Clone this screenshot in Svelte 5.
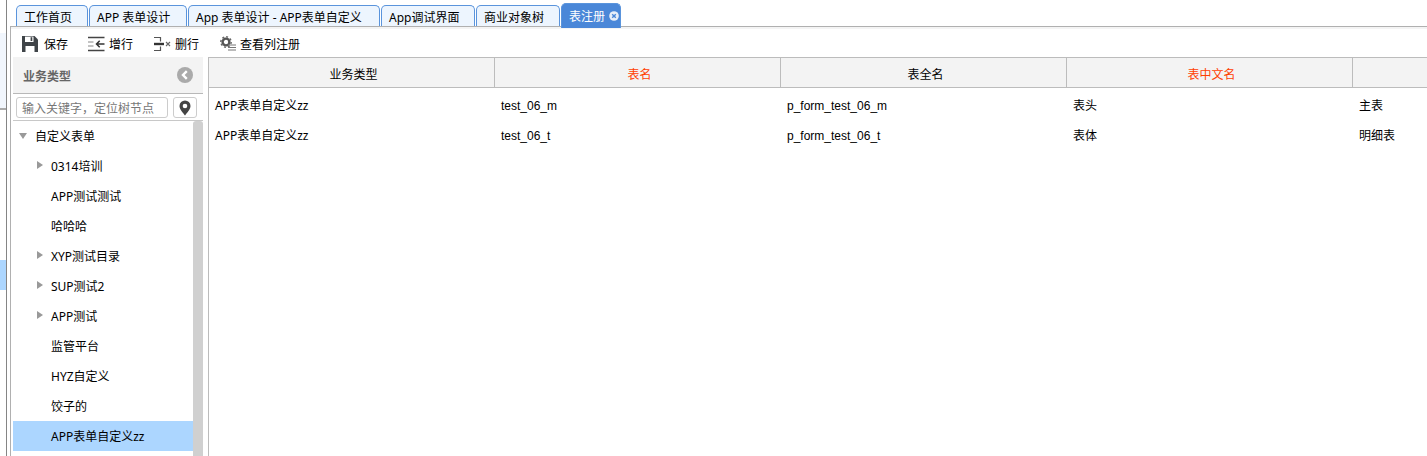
<script>
  const tabs = [
    { name: '工作首页', w: 72 },
    { name: 'APP 表单设计', w: 98 },
    { name: 'App 表单设计 - APP表单自定义', w: 192 },
    { name: 'App调试界面', w: 94 },
    { name: '商业对象树', w: 84 },
  ];

  const nodes = [
    { name: '0314培训', arrow: true },
    { name: 'APP测试测试' },
    { name: '哈哈哈' },
    { name: 'XYP测试目录', arrow: true },
    { name: 'SUP测试2', arrow: true },
    { name: 'APP测试', arrow: true },
    { name: '监管平台' },
    { name: 'HYZ自定义' },
    { name: '饺子的' },
    { name: 'APP表单自定义zz', selected: true },
  ];

  const columns = [
    { name: '业务类型' },
    { name: '表名', required: true },
    { name: '表全名' },
    { name: '表中文名', required: true },
    { name: '' },
  ];

  const rows = [
    ['APP表单自定义zz', 'test_06_m', 'p_form_test_06_m', '表头', '主表'],
    ['APP表单自定义zz', 'test_06_t', 'p_form_test_06_t', '表体', '明细表'],
  ];
</script>

<div class="page">
  <div class="outer">
    <div class="outer-pale"></div>
    <div class="outer-mark"></div>
  </div>
  <div class="main">
    <div class="tabs">
      {#each tabs as tab}
        <div class="tab" style="width: {tab.w}px">{tab.name}</div>
      {/each}
      <div class="tab active">
        表注册
        <svg class="close" width="10" height="10" viewBox="0 0 10 10">
          <circle cx="5" cy="5" r="4.800" fill="#e8eef8" />
          <path d="M3.200 3.200l3.600 3.600M6.800 3.200l-3.600 3.600" stroke="#4a87d8" stroke-width="1.400" />
        </svg>
      </div>
    </div>
    <div class="panel">
      <div class="toolbar">
        <div class="tool save">
          <svg width="16" height="16" viewBox="0 0 16 16">
            <path d="M0 0h12.500L16 3.500V16H0z" fill="#3f4448" />
            <rect x="3" y=".6" width="8.500" height="5.400" fill="#fff" />
            <rect x="8.600" y="1.200" width="1.700" height="3.800" fill="#3f4448" />
            <rect x="3.500" y="10" width="9" height="6" fill="#fff" />
          </svg>
          保存
        </div>
        <div class="tool add">
          <svg width="17" height="16" viewBox="0 0 17 16">
            <path d="M0 1.500h16.500M0 14.500h16.500" stroke="#444" stroke-width="1.400" />
            <path d="M0 6h5.500M0 10h5.500" stroke="#888" stroke-width="1" />
            <path d="M16.500 8H8.500M11.700 4.800L8.500 8l3.200 3.200" stroke="#333" stroke-width="1.500" fill="none" />
          </svg>
          增行
        </div>
        <div class="tool del">
          <svg width="17" height="16" viewBox="0 0 17 16">
            <path d="M0 1.500h6.500v4M0 14.500h6.500v-4" stroke="#555" stroke-width="1.200" fill="none" />
            <path d="M0 8h10" stroke="#333" stroke-width="2.400" />
            <path d="M12 6l4 4M16 6l-4 4" stroke="#666" stroke-width="1.100" />
          </svg>
          删行
        </div>
        <div class="tool cols">
          <svg width="16" height="15" viewBox="0 0 16 15">
            <circle cx="6" cy="6" r="3.400" fill="none" stroke="#555" stroke-width="2.400" />
            <circle cx="6" cy="6" r="5.200" fill="none" stroke="#666" stroke-width="1.400" stroke-dasharray="2 2" />
            <path d="M8 9h8M8 11.500h8M8 14h8" stroke="#777" stroke-width="1" />
          </svg>
          查看列注册
        </div>
      </div>
      <div class="body">
        <aside class="side">
          <div class="side-head">
            <span>业务类型</span>
            <svg width="16" height="16" viewBox="0 0 16 16">
              <circle cx="8" cy="8" r="8" fill="#aaa" />
              <path d="M9.800 4.200L6 8l3.800 3.800" stroke="#fff" stroke-width="2.400" fill="none" />
            </svg>
          </div>
          <div class="search">
            <div class="search-input">输入关键字，定位树节点</div>
            <div class="search-btn">
              <svg width="12" height="16" viewBox="0 0 12 16">
                <path d="M6 .5a5.500 5.500 0 0 1 5.500 5.500c0 3.500-3.500 6.800-5.500 9.500C4 12.800.5 9.500.5 6A5.500 5.500 0 0 1 6 .5z" fill="#444" />
                <circle cx="6" cy="6" r="2.300" fill="#fff" />
              </svg>
            </div>
          </div>
          <div class="tree">
            <div class="tree-list">
              <div class="node root">
                <i class="arrow down"></i>
                自定义表单
              </div>
              {#each nodes as node}
                <div class="node child" class:selected={node.selected}>
                  {#if node.arrow}<i class="arrow"></i>{/if}
                  {node.name}
                </div>
              {/each}
            </div>
            <div class="scrollbar"></div>
          </div>
        </aside>
        <section class="grid">
          <div class="grid-head">
            {#each columns as col}
              <div class="th" class:required={col.required}>{col.name}</div>
            {/each}
          </div>
          {#each rows as row}
            <div class="tr">
              {#each row as cell}
                <div class="td">{cell}</div>
              {/each}
            </div>
          {/each}
        </section>
      </div>
    </div>
  </div>
</div>

<style>
  :global(body) {
    margin: 0;
    background: #fff;
    overflow: hidden;
  }

  .page {
    display: flex;
    height: 456px;
    overflow: hidden;
    font-family: "Noto Sans", "Noto Sans CJK SC", sans-serif;
    font-size: 12px;
    color: #000;
  }

  .outer {
    width: 6px;
    flex: none;
    border-right: 1px solid #858585;
  }

  .outer-pale {
    margin-top: 33px;
    height: 75px;
    background: #f1f6fd;
    border-bottom: 2px solid #aaa;
  }

  .outer-mark {
    margin-top: 150px;
    height: 30px;
    background: #acd6ff;
  }

  .main {
    flex: 1;
    min-width: 0;
  }

  .tabs {
    display: flex;
    align-items: flex-end;
    gap: 1px;
    height: 27px;
    margin-left: 3px;
    padding-left: 6px;
    box-sizing: border-box;
    border-bottom: 1px solid #b0b0b0;
  }

  .tab {
    height: 21px;
    flex: none;
    box-sizing: border-box;
    border: 1px solid #5a94dc;
    border-bottom: none;
    border-radius: 5px 5px 0 0;
    background: #edf5fe;
    padding: 3px 0 0 7px;
    line-height: 18px;
    white-space: nowrap;
    overflow: hidden;
  }

  .tab.active {
    width: 60px;
    height: 25px;
    margin-bottom: -2px;
    padding-top: 4px;
    background: #4a87d8;
    color: #fff;
    position: relative;
  }

  .close {
    position: absolute;
    left: 47px;
    top: 7px;
  }

  .panel {
    border-left: 1px solid #b0b0b0;
    margin-left: 3px;
  }

  .toolbar {
    display: flex;
    align-items: center;
    height: 30px;
    padding-top: 1px;
    border-top: 2px solid #f4f4f4;
    box-sizing: border-box;
  }

  .tool {
    display: flex;
    align-items: center;
    gap: 4px;
    white-space: nowrap;
  }

  .save {
    margin-left: 11px;
    gap: 6px;
  }

  .add {
    margin-left: 20px;
  }

  .del,
  .cols {
    margin-left: 21px;
  }

  .body {
    display: flex;
    height: 399px;
  }

  .side {
    width: 197px;
    flex: none;
    box-sizing: border-box;
    padding: 0 5px 0 2px;
  }

  .side-head {
    display: flex;
    align-items: center;
    justify-content: space-between;
    height: 37px;
    padding: 0 10px;
    background: #f3f3f3;
    border-bottom: 1px solid #b8b8b8;
    box-sizing: border-box;
    color: #666;
    font-weight: bold;
  }

  .side-head span {
    padding-top: 2px;
  }

  .search {
    display: flex;
    gap: 5px;
    height: 27px;
    padding: 3px 0 0 3px;
    box-sizing: border-box;
    border-bottom: 1px solid #c8c8c8;
  }

  .search-input {
    width: 152px;
    height: 21px;
    box-sizing: border-box;
    border: 1px solid #ccc;
    border-radius: 3px;
    padding-left: 5px;
    line-height: 22px;
    color: #777;
    white-space: nowrap;
  }

  .search-btn {
    width: 24px;
    height: 21px;
    box-sizing: border-box;
    border: 1px solid #ccc;
    border-radius: 3px;
    display: flex;
    align-items: center;
    justify-content: center;
  }

  .tree {
    display: flex;
    height: 335px;
    overflow: hidden;
  }

  .tree-list {
    width: 180px;
    flex: none;
  }

  .scrollbar {
    width: 10px;
    background: #d0d0d0;
    border-radius: 3px 3px 0 0;
  }

  .node {
    position: relative;
    height: 30px;
    line-height: 32px;
    white-space: nowrap;
  }

  .root {
    padding-left: 22px;
  }

  .child {
    padding-left: 38px;
  }

  .selected {
    background: #acd6ff;
  }

  .arrow {
    position: absolute;
    left: 24px;
    top: 10px;
    width: 0;
    height: 0;
    border-style: solid;
    border-width: 4.500px 0 4.500px 6px;
    border-color: transparent transparent transparent #999;
  }

  .arrow.down {
    left: 6px;
    top: 12px;
    border-width: 6px 4.500px 0 4.500px;
    border-color: #999 transparent transparent transparent;
  }

  .grid {
    flex: 1;
    min-width: 0;
    border-left: 1px solid #bcbcbc;
  }

  .grid-head {
    display: flex;
    height: 31px;
    box-sizing: border-box;
    background: #f3f3f3;
    border-top: 1px solid #bcbcbc;
    border-bottom: 1px solid #bcbcbc;
  }

  .th {
    width: 286px;
    flex: none;
    padding-left: 4px;
    box-sizing: border-box;
    border-right: 1px solid #bcbcbc;
    text-align: center;
    line-height: 33px;
  }

  .required {
    color: #ff4000;
  }

  .tr {
    display: flex;
    height: 30px;
  }

  .td {
    width: 286px;
    flex: none;
    padding-left: 6px;
    box-sizing: border-box;
    line-height: 36px;
    white-space: nowrap;
  }

  /* the two name columns are latin only and run narrower */
  .td:nth-child(2),
  .td:nth-child(3) {
    font-family: "Liberation Sans", sans-serif;
  }
</style>
